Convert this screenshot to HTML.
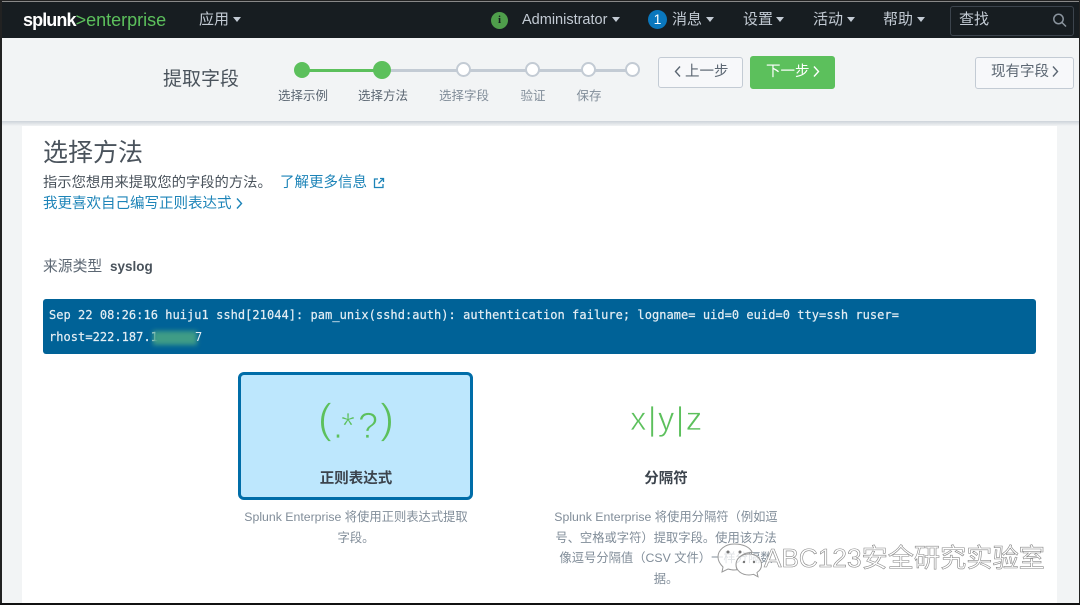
<!DOCTYPE html>
<html lang="zh-CN">
<head>
<meta charset="utf-8">
<title>提取字段</title>
<style>
html,body{margin:0;padding:0;background:#fff}
body{position:relative;width:1080px;height:605px;overflow:hidden;font-family:"Liberation Sans","Noto Sans CJK SC",sans-serif;color:#4a535c}
.a{position:absolute;white-space:nowrap;line-height:1}
.c{transform:translateX(-50%)}
.caret{position:absolute;width:0;height:0;border-left:4.5px solid transparent;border-right:4.5px solid transparent;border-top:5px solid #c3cbd4}
.dot{position:absolute;width:11px;height:11px;border-radius:50%;background:#fff;border:2.5px solid #c3cbd4;top:62px}
.g{position:absolute;width:16px;height:16px;border-radius:50%;background:#5cc05c;top:62px}
.n{font-size:15px;color:#c3cbd4;top:12px}
.lab{font-size:12.5px;top:90px;color:#818d99}
.btn{position:absolute;box-sizing:border-box;border:1px solid #c3cbd4;border-radius:3px;background:#f7f8fa}
.bt{font-size:14.5px;color:#5c6773;top:65px}
.desc{font-size:12.3px;color:#818d99}
.th{font-size:36px;top:408px;color:#5cc05c;-webkit-text-stroke:.8px #bde7fd}
.pr{font-size:42px;top:398px}
.th2{font-size:33px;color:#5cc05c;-webkit-text-stroke:.7px #fff}
</style>
</head>
<body>
<div class="a" style="left:0;top:0;width:1080px;height:3px;background:linear-gradient(#222 0 1px,#888 1px 2px,#171d21 2px)"></div>
<div class="a" style="left:0;top:3px;width:1080px;height:35px;background:#171d21"></div>
<div class="a" style="left:0;top:38px;width:1080px;height:83px;background:#f2f4f5"></div>
<div class="a" style="left:0;top:121px;width:1080px;height:5px;background:linear-gradient(#cdd3d9,#f2f4f5)"></div>
<div class="a" style="left:0;top:126px;width:22px;height:477px;background:#f2f4f5"></div>
<div class="a" style="left:1057px;top:126px;width:23px;height:477px;background:#f2f4f5"></div>
<div class="a" style="left:0;top:0;width:1.5px;height:605px;background:#222"></div>
<div class="a" style="left:1079px;top:0;width:1px;height:605px;background:#222"></div>
<div class="a" style="left:0;top:603px;width:1080px;height:2px;background:#111"></div>

<div class="a" style="left:23px;top:11px;font-size:18px;font-weight:700;letter-spacing:-.9px;color:#fff">splunk<span style="font-weight:400;letter-spacing:0;color:#5cc05c">&gt;enterprise</span></div>
<div class="a n" style="left:199px">应用</div><div class="caret" style="left:233px;top:17px"></div>

<div class="a" style="left:491px;top:12px;width:17px;height:17px;border-radius:50%;background:#4f9e4b;color:#171d21;font:700 11px/17px 'Liberation Serif',serif;text-align:center">i</div>
<div class="a n" style="left:522px;top:13px;font-size:14.5px">Administrator</div><div class="caret" style="left:612px;top:17px"></div>
<div class="a" style="left:648px;top:10px;width:19px;height:19px;border-radius:50%;background:#0a77bd;color:#fff;font-size:14px;line-height:19px;text-align:center">1</div>
<div class="a n" style="left:672px">消息</div><div class="caret" style="left:706px;top:17px"></div>
<div class="a n" style="left:743px">设置</div><div class="caret" style="left:776px;top:17px"></div>
<div class="a n" style="left:813px">活动</div><div class="caret" style="left:847px;top:17px"></div>
<div class="a n" style="left:883px">帮助</div><div class="caret" style="left:917px;top:17px"></div>
<div class="a" style="left:950px;top:6px;width:124px;height:30px;box-sizing:border-box;border:1px solid #3c444d;border-radius:3px"></div>
<div class="a n" style="left:959px">查找</div>
<svg class="a" style="left:1052px;top:12px" width="16" height="16" viewBox="0 0 16 16" fill="none" stroke="#8a949e" stroke-width="1.5"><circle cx="6.500" cy="7" r="4.700"/><path d="M10 10.500l4 4"/></svg>

<div class="a" style="left:163px;top:70px;font-size:19px;color:#4a535c">提取字段</div>
<div class="a" style="left:302px;top:69px;width:80px;height:3px;background:#5cc05c"></div>
<div class="a" style="left:382px;top:69px;width:250px;height:3px;background:#c3cbd4"></div>
<div class="g" style="left:294px"></div>
<div class="g" style="left:373px;width:18px;height:18px;top:61px"></div>
<div class="dot" style="left:456px"></div>
<div class="dot" style="left:525px"></div>
<div class="dot" style="left:581px"></div>
<div class="dot" style="left:625px"></div>
<div class="a lab c" style="left:303px;color:#5c6773">选择示例</div>
<div class="a lab c" style="left:383px;color:#5c6773">选择方法</div>
<div class="a lab c" style="left:464px">选择字段</div>
<div class="a lab c" style="left:533px">验证</div>
<div class="a lab c" style="left:589px">保存</div>

<div class="btn" style="left:658px;top:57px;width:85px;height:31px"></div>
<svg class="a" style="left:674px;top:65px" width="8" height="13" viewBox="0 0 8 13" fill="none" stroke="#5c6773" stroke-width="1.400"><path d="M6 1.500L1.500 6.500 6 11.500"/></svg>
<div class="a bt" style="left:685px">上一步</div>
<div class="btn" style="left:750px;top:56px;width:85px;height:33px;background:#5cc05c;border-color:#5cc05c"></div>
<div class="a bt" style="left:766px;color:#fff">下一步</div>
<svg class="a" style="left:812px;top:65px" width="8" height="13" viewBox="0 0 8 13" fill="none" stroke="#fff" stroke-width="1.400"><path d="M2 1.500L6.500 6.500 2 11.500"/></svg>
<div class="btn" style="left:975px;top:57px;width:99px;height:32px"></div>
<div class="a bt" style="left:991px">现有字段</div>
<svg class="a" style="left:1051px;top:65px" width="8" height="13" viewBox="0 0 8 13" fill="none" stroke="#5c6773" stroke-width="1.400"><path d="M2 1.500L6.500 6.500 2 11.500"/></svg>

<div class="a" style="left:43px;top:141px;font-size:25px;color:#4a535c">选择方法</div>
<div class="a" style="left:43px;top:176px;font-size:14.300px;color:#4a535c">指示您想用来提取您的字段的方法。</div>
<div class="a" style="left:280px;top:176px;font-size:14.500px;color:#1d84b8">了解更多信息</div>
<svg class="a" style="left:373px;top:177px" width="12" height="12" viewBox="0 0 12 12" fill="none" stroke="#1d84b8" stroke-width="1.300"><path d="M5 2H1.500v8.500H10V7M7 1.500h3.500V5M10.500 1.500L5.500 6.500"/></svg>
<div class="a" style="left:43px;top:197px;font-size:14.500px;color:#1d84b8">我更喜欢自己编写正则表达式</div>
<svg class="a" style="left:235px;top:197px" width="8" height="13" viewBox="0 0 8 13" fill="none" stroke="#1d84b8" stroke-width="1.400"><path d="M2 1.500L6.500 6.500 2 11.500"/></svg>
<div class="a" style="left:43px;top:260px;font-size:14.800px;color:#5c6773">来源类型</div>
<div class="a" style="left:110px;top:260px;font-size:13.500px;font-weight:700;color:#4a535c">syslog</div>

<div class="a" style="left:43px;top:299px;width:993px;height:55px;background:#006297;border-radius:3px"></div>
<div class="a" style="left:49px;top:309px;font:12px/1 'DejaVu Sans Mono',monospace;letter-spacing:.04px;color:#e4eef4;-webkit-text-stroke:.2px #e4eef4">Sep 22 08:26:16 huiju1 sshd[21044]: pam_unix(sshd:auth): authentication failure; logname= uid=0 euid=0 tty=ssh ruser=</div>
<div class="a" style="left:49px;top:331px;font:12px/1 'DejaVu Sans Mono',monospace;letter-spacing:.04px;color:#e4eef4;-webkit-text-stroke:.2px #e4eef4">rhost=222.187.1</div>
<div class="a" style="left:153px;top:331px;width:44px;height:14px;background:#3f9c86;filter:blur(2.500px)"></div>
<div class="a" style="left:195px;top:331px;font:12px/1 'DejaVu Sans Mono',monospace;color:#e4eef4">7</div>

<div class="a" style="left:238px;top:372px;width:235px;height:128px;box-sizing:border-box;background:#bde7fd;border:3px solid #006da8;border-radius:6px"></div>
<div class="a th pr" style="left:318px">(</div>
<div class="a th" style="left:333px">.</div>
<div class="a th" style="left:341px">*</div>
<div class="a th" style="left:358px">?</div>
<div class="a th pr" style="left:380px">)</div>
<div class="a c" style="left:356px;top:472px;font-size:14.500px;font-weight:700;color:#3c444d">正则表达式</div>
<div class="a c desc" style="left:356px;top:511px">Splunk Enterprise 将使用正则表达式提取</div>
<div class="a c desc" style="left:356px;top:532px">字段。</div>

<div class="a th2" style="left:630px;top:402px;letter-spacing:1.400px">x|y|z</div>
<div class="a c" style="left:666px;top:472px;font-size:14.500px;font-weight:700;color:#3c444d">分隔符</div>
<div class="a c desc" style="left:666px;top:511px">Splunk Enterprise 将使用分隔符（例如逗</div>
<div class="a c desc" style="left:666px;top:532px">号、空格或字符）提取字段。使用该方法</div>
<div class="a c desc" style="left:666px;top:552px">像逗号分隔值（CSV 文件）一样分隔数</div>
<div class="a c desc" style="left:666px;top:573px">据。</div>

<svg class="a" style="left:716px;top:542px" width="50" height="36" viewBox="0 0 50 36" fill="rgba(255,255,255,.75)" stroke="#999" stroke-width="1"><path d="M18 2C9 2 2 8 2 15c0 4 2 7 5 10l-1 5 6-3c2 .5 4 1 6 1 1 0 2 0 3-.2-.5-1.500-.8-3-.8-4.800 0-7 6.800-12.500 15-12.500h1C34 5 27 2 18 2z"/><path d="M33 12c-7.500 0-13 4.500-13 10.500S25.500 33 33 33c1.500 0 3-.3 4.500-.7l4.500 2.500-1-4.300c3-2 4.500-4.800 4.500-7.500C45.500 16.500 40 12 33 12z"/><circle cx="12" cy="10" r="1.500" fill="#777" stroke="none"/><circle cx="24" cy="10" r="1.500" fill="#777" stroke="none"/><circle cx="28" cy="20" r="1.200" fill="#777" stroke="none"/><circle cx="38" cy="20" r="1.200" fill="#777" stroke="none"/></svg>
<div class="a" style="left:764px;top:545px;font-size:26.200px;color:#fff;-webkit-text-stroke:.6px #888">ABC123安全研究实验室</div>
</body>
</html>
